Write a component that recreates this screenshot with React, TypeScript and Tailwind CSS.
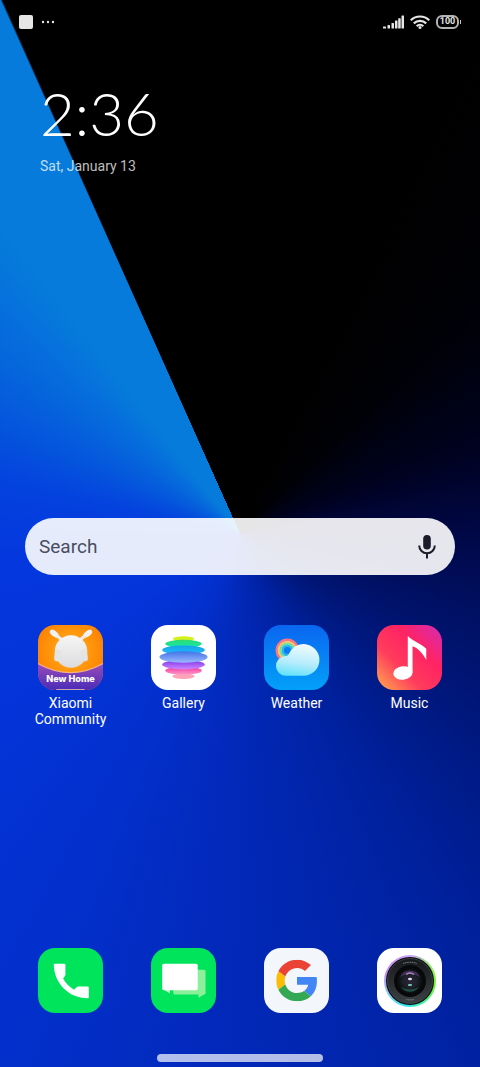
// src/App.tsx
import React, { useState } from 'react';

type AppItem = {
  id: string;
  name: string;
  icon: React.ReactNode;
};

// --- BEGIN ICONS ---

const CommunityIcon = () => (
  <svg viewBox="0 0 64 64" className="size-full">
    <defs>
      <radialGradient id="mi-bg" cx="0.5" cy="0.4" r="0.6">
        <stop offset="0" stopColor="#ffb32c" />
        <stop offset="0.6" stopColor="#ff9208" />
        <stop offset="1" stopColor="#fa7d05" />
      </radialGradient>
      <linearGradient id="mi-band" x1="0" y1="0" x2="0" y2="1">
        <stop offset="0" stopColor="#9a4cb8" />
        <stop offset="1" stopColor="#4a2bb8" />
      </linearGradient>
      <linearGradient id="mi-head" x1="0" y1="0" x2="0" y2="1">
        <stop offset="0" stopColor="#f6f6f6" />
        <stop offset="1" stopColor="#dcdcde" />
      </linearGradient>
    </defs>
    <rect width="64" height="64" fill="url(#mi-bg)" />
    <ellipse cx="16" cy="8.500" rx="5" ry="2.800" transform="rotate(38 16 8.500)" fill="#f2f2f2" />
    <ellipse cx="49" cy="8.500" rx="5" ry="2.800" transform="rotate(-38 49 8.500)" fill="#f2f2f2" />
    <path d="M18 10l6 5M47 10l-6 5" stroke="#eeeeee" strokeWidth="3" />
    <circle cx="32.500" cy="26" r="16" fill="url(#mi-head)" />
    <path d="M17 23C17 28 15.500 31 16 34C16.500 36 19 36 21 35.500L24 26zM48 23C48 28 49.500 31 49 34C48.500 36 46 36 44 35.500L41 26z" fill="#e4e4e5" />
    <path d="M0 38q32 18 64 0v26H0z" fill="url(#mi-band)" />
    <path d="M0 38q32 18 64 0" fill="none" stroke="#ffc48a" strokeOpacity="0.8" strokeWidth="1.200" />
    <path d="M18 63.500h28" stroke="#ffd9a8" strokeOpacity="0.7" strokeWidth="1" />
    <text x="32" y="56" textAnchor="middle" fill="#fff" fontFamily="Inter, sans-serif" fontWeight="800" fontSize="9">
      New Home
    </text>
  </svg>
);

const GalleryIcon = () => (
  <svg viewBox="0 0 64 64" className="size-full bg-white">
    <defs>
      <linearGradient id="ga-2" x1="0" y1="0" x2="0" y2="1">
        <stop offset="0" stopColor="#2fdc6e" />
        <stop offset="1" stopColor="#14e6b4" />
      </linearGradient>
      <linearGradient id="ga-3" x1="0" y1="0" x2="0" y2="1">
        <stop offset="0" stopColor="#12a5e6" />
        <stop offset="1" stopColor="#25b8ff" />
      </linearGradient>
      <linearGradient id="ga-4" x1="0" y1="0" x2="0" y2="1">
        <stop offset="0" stopColor="#3f74e6" />
        <stop offset="1" stopColor="#9db8ff" />
      </linearGradient>
      <linearGradient id="ga-5" x1="0" y1="0" x2="0" y2="1">
        <stop offset="0" stopColor="#7a35e8" />
        <stop offset="1" stopColor="#cf86ff" />
      </linearGradient>
      <linearGradient id="ga-6" x1="0" y1="0" x2="0" y2="1">
        <stop offset="0" stopColor="#f0309c" />
        <stop offset="1" stopColor="#ff9cc8" />
      </linearGradient>
    </defs>
    <ellipse cx="32" cy="50.500" rx="11" ry="2.700" fill="#ffa3b8" />
    <ellipse cx="32" cy="45" rx="18" ry="4" fill="url(#ga-6)" />
    <ellipse cx="32" cy="39" rx="21" ry="4.700" fill="url(#ga-5)" />
    <ellipse cx="32" cy="13.500" rx="10.500" ry="2.500" fill="#d4f01e" />
    <ellipse cx="32" cy="18.500" rx="18" ry="4" fill="url(#ga-2)" />
    <ellipse cx="32" cy="24.700" rx="21" ry="4.500" fill="url(#ga-3)" />
    <ellipse cx="32" cy="31.500" rx="23.700" ry="5.700" fill="url(#ga-4)" />
  </svg>
);

const WeatherIcon = () => (
  <svg viewBox="0 0 64 64" className="size-full">
    <defs>
      <linearGradient id="we-bg" x1="0" y1="0" x2="0" y2="1">
        <stop offset="0" stopColor="#0a66f0" />
        <stop offset="1" stopColor="#03a0f8" />
      </linearGradient>
      <linearGradient id="we-cloud" x1="0.6" y1="0" x2="0.4" y2="1">
        <stop offset="0" stopColor="#f2fbff" />
        <stop offset="0.6" stopColor="#b4ecfc" />
        <stop offset="1" stopColor="#66e2fb" />
      </linearGradient>
    </defs>
    <rect width="64" height="64" fill="url(#we-bg)" />
    <g fill="none" strokeWidth="2.200">
      <circle cx="23" cy="25" r="10.500" stroke="#ff7482" />
      <circle cx="23" cy="25" r="8.500" stroke="#ffc46a" />
      <circle cx="23" cy="25" r="6.500" stroke="#6fe6a4" />
      <circle cx="23" cy="25" r="4.500" stroke="#2fb4f4" />
    </g>
    <path
      d="M22 50a9.700 9.700 0 0 1-1-19.400c1.500 0 2.500-.2 3.500-2A15.600 15.600 0 1 1 38.500 50z"
      fill="url(#we-cloud)"
    />
  </svg>
);

const MusicIcon = () => (
  <svg viewBox="0 0 64 64" className="size-full">
    <defs>
      <linearGradient id="mu-bg" x1="0" y1="1" x2="1" y2="0">
        <stop offset="0" stopColor="#ffae4e" />
        <stop offset="0.35" stopColor="#ff3c5c" />
        <stop offset="0.65" stopColor="#ff2362" />
        <stop offset="1" stopColor="#d32bb8" />
      </linearGradient>
    </defs>
    <rect width="64" height="64" fill="url(#mu-bg)" />
    <path d="M30.300 10.500C34 15 43 18 48.500 23.300V34.500C45 28 40 22.500 35 21V47H30.300z" fill="#fff" />
    <ellipse cx="25.500" cy="47.300" rx="9.500" ry="6.600" transform="rotate(-6 25.500 47.300)" fill="#fff" />
  </svg>
);

const PhoneIcon = () => (
  <svg viewBox="0 0 64 64" className="size-full bg-[#00e45c]">
    <path
      d="M16.500 15.500H26q1 0 1 1v9.500q0 1-.7 1.700L24.700 30Q28.500 37 35.500 41l2.200-2.200q.8-.8 1.800-.8H49q1 0 1 1v9.500q0 1-1 1C31 49.500 16 35.500 15.500 16.500q0-1 1-1z"
      fill="#fff"
    />
  </svg>
);

const MessagesIcon = () => (
  <svg viewBox="0 0 64 64" className="size-full bg-[#00e45c]">
    <path d="M22 21.500h30q1.700 0 1.700 1.700V45l-7 4v-3.200H23.500q-1.500 0-1.500-1.500z" fill="#8cf09a" />
    <path d="M11 40l7.700 4.800V41z" fill="#b8f6c0" />
    <rect x="11" y="15.500" width="35" height="26" rx="1.700" fill="#fff" />
  </svg>
);

const GoogleIcon = () => (
  <svg viewBox="0 0 64 64" className="size-full bg-[#f3f6fa]">
    <svg x="12" y="11.500" width="41" height="41" viewBox="0 0 48 48">
      <path fill="#EA4335" d="M24 9.500c3.540 0 6.710 1.220 9.210 3.600l6.850-6.850C35.900 2.380 30.470 0 24 0 14.620 0 6.510 5.380 2.560 13.220l7.980 6.190C12.430 13.720 17.740 9.500 24 9.500z" />
      <path fill="#4285F4" d="M46.980 24.550c0-1.570-.15-3.090-.38-4.550H24v9.020h12.940c-.58 2.960-2.260 5.480-4.780 7.180l7.730 6c4.510-4.180 7.090-10.360 7.090-17.650z" />
      <path fill="#FBBC05" d="M10.530 28.590c-.48-1.450-.76-2.990-.76-4.590s.27-3.140.76-4.590l-7.980-6.190C.92 16.460 0 20.120 0 24c0 3.880.92 7.540 2.560 10.780l7.970-6.190z" />
      <path fill="#34A853" d="M24 48c6.480 0 11.930-2.130 15.890-5.810l-7.730-6c-2.150 1.450-4.920 2.300-8.160 2.300-6.260 0-11.570-4.220-13.470-9.910l-7.980 6.190C6.510 42.620 14.620 48 24 48z" />
    </svg>
  </svg>
);

const CameraIcon = () => (
  <div className="flex size-full items-center justify-center bg-white">
    <div className="size-[52px] rounded-full bg-[conic-gradient(#c9a5f5,#8cf05a_60deg,#6df51e_100deg,#3ff58c_140deg,#2fe6f0_190deg,#8cc8f5_240deg,#c58cf5_290deg,#c9a5f5)] p-px">
      <svg viewBox="0 0 50 50" className="size-full">
        <defs>
          <linearGradient id="ca-body" x1="0" y1="0" x2="0" y2="1">
            <stop offset="0" stopColor="#17191b" />
            <stop offset="1" stopColor="#3b4044" />
          </linearGradient>
          <radialGradient id="ca-lens">
            <stop offset="0" stopColor="#2c2438" />
            <stop offset="0.5" stopColor="#1c2028" />
            <stop offset="1" stopColor="#050607" />
          </radialGradient>
        </defs>
        <circle cx="25" cy="25" r="24" fill="#0b0c0d" />
        <circle cx="25" cy="25" r="22.500" fill="url(#ca-body)" stroke="#4b5054" strokeWidth="0.700" />
        <circle cx="25" cy="25" r="16" fill="#08090a" />
        <circle cx="25" cy="25" r="14" fill="url(#ca-lens)" />
        <path d="M15 21a11 11 0 0 1 20 0q-10-6-20 0z" fill="#7a4c96" fillOpacity="0.45" />
        <path d="M16 31a11 11 0 0 0 18 0q-9 5-18 0z" fill="#2f8c74" fillOpacity="0.5" />
        <path d="M21 18.500q4-3 8 0" stroke="#a98abf" strokeWidth="1.300" fill="none" />
        <ellipse cx="25" cy="23" rx="2" ry="1.200" fill="#e8d8f8" />
        <ellipse cx="25" cy="29" rx="2.200" ry="0.900" fill="#7fd0b8" />
        <path d="M18 7.500q7-2.500 14 0M21 43.500q4 .8 8 0" stroke="#8b9094" strokeWidth="1" strokeDasharray="1.200 0.600" fill="none" />
      </svg>
    </div>
  </div>
);

// --- END ICONS ---

const homeApps: AppItem[] = [
  { id: 'community', name: 'Xiaomi Community', icon: <CommunityIcon /> },
  { id: 'gallery', name: 'Gallery', icon: <GalleryIcon /> },
  { id: 'weather', name: 'Weather', icon: <WeatherIcon /> },
  { id: 'music', name: 'Music', icon: <MusicIcon /> },
];

const dockApps: AppItem[] = [
  { id: 'phone', name: 'Phone', icon: <PhoneIcon /> },
  { id: 'messages', name: 'Messages', icon: <MessagesIcon /> },
  { id: 'google', name: 'Google', icon: <GoogleIcon /> },
  { id: 'camera', name: 'Camera', icon: <CameraIcon /> },
];

const AppButton = ({ app, showLabel = false }: { app: AppItem; showLabel?: boolean }) => (
  <button type="button" aria-label={app.name} className="flex flex-col items-center gap-[5px]">
    <span className="block size-[65px] overflow-hidden rounded-[17px]">{app.icon}</span>
    {showLabel && <span className="w-20 text-center text-sm leading-4 text-white">{app.name}</span>}
  </button>
);

const StatusBar = () => (
  <header className="flex h-[43px] items-center justify-between px-[19px]">
    <div className="flex items-center gap-2">
      <span className="size-3.5 rounded-xs bg-[#e6e6e6]" />
      <svg viewBox="0 0 14 4" className="h-1 w-3.5" fill="#e6e6e6">
        <circle cx="2" cy="2" r="1.200" />
        <circle cx="7" cy="2" r="1.200" />
        <circle cx="12" cy="2" r="1.200" />
      </svg>
    </div>
    <div className="flex items-center gap-1.5">
      {/* Signal */}
      <svg viewBox="0 0 21 14" className="h-3.5 w-[21px]" fill="#e6e6e6">
        <rect x="0" y="11.500" width="3" height="2" rx="0.500" />
        <rect x="4.500" y="10" width="2.500" height="3.500" rx="0.500" />
        <rect x="8.500" y="8" width="2.500" height="5.500" rx="0.500" />
        <rect x="12" y="5.500" width="2.500" height="8" rx="0.500" />
        <rect x="15.200" y="3.300" width="2.500" height="10.200" rx="0.500" />
        <rect x="18.500" y="0.500" width="2.500" height="13" rx="0.500" />
      </svg>
      {/* Wifi */}
      <svg viewBox="0 0 20 14" className="h-3.5 w-5" fill="none" stroke="#e6e6e6" strokeWidth="2.200">
        <path d="M.8 5.300a13 13 0 0 1 18.400 0" />
        <path d="M3.800 8.400a8.800 8.800 0 0 1 12.400 0" />
        <path d="M6.700 11.200a4.700 4.700 0 0 1 6.600 0" />
        <circle cx="10" cy="12.400" r="1.500" fill="#e6e6e6" stroke="none" />
      </svg>
      {/* Battery */}
      <div className="flex items-center gap-px">
        <span className="flex h-3.5 w-[23px] items-center justify-center rounded-md border-2 border-[#b4b4b4] text-[9px] leading-none font-bold text-[#e6e6e6]">
          100
        </span>
        <span className="h-1 w-px bg-[#c4c4c4]" />
      </div>
    </div>
  </header>
);

export default function HomeScreen() {
  const [query, setQuery] = useState<string>('');

  return (
    <div className="flex min-h-screen flex-col bg-[conic-gradient(#000_0deg,#000_25deg,#000106_45deg,#000220_70deg,#000846_90deg,#001064_110deg,#00187e_130deg,#00219e_152deg,#0228b8_180deg,#0330cc_205deg,#0434da_235deg,#0438de_265deg,#0442de_282deg,#055adc_298deg,#0670dc_314deg,#067bdb_322deg,#067bdb_335.8deg,#000_336deg)] font-[Roboto,sans-serif]">
      <StatusBar />

      {/* Clock */}
      <div className="mt-9 flex flex-col gap-[9px] px-10 text-white">
        <time className="font-[Lato,sans-serif] text-[60px] leading-[68px] font-light">2:36</time>
        <span className="text-sm leading-5 text-white/75">Sat, January 13</span>
      </div>

      {/* Search */}
      <form
        onSubmit={(e) => e.preventDefault()}
        className="mx-[25px] mt-[342px] flex h-[57px] items-center rounded-full bg-white/90 pr-4 pl-3.5"
      >
        <input
          type="text"
          aria-label="Search"
          placeholder="Search"
          value={query}
          onChange={(e) => setQuery(e.target.value)}
          className="h-full min-w-0 flex-1 bg-transparent text-[19px] leading-6 text-[#20243a] placeholder:text-[#484d5e] focus:outline-none"
        />
        <button type="button" aria-label="Voice search" className="size-6">
          <svg viewBox="0 0 24 24" className="size-full">
            <rect x="8.200" y="0" width="7.600" height="14.500" rx="3.800" fill="#1b1b29" />
            <path d="M4.200 10.500a7.800 7.800 0 0 0 15.600 0M12 18.300v5.200" fill="none" stroke="#1b1b29" strokeWidth="2" />
          </svg>
        </button>
      </form>

      {/* Apps */}
      <main className="mt-[50px] grid grid-cols-4 items-start px-3.5">
        {homeApps.map((app) => (
          <AppButton key={app.id} app={app} showLabel />
        ))}
      </main>

      {/* Dock */}
      <nav className="mt-auto grid grid-cols-4 px-3.5">
        {dockApps.map((app) => (
          <AppButton key={app.id} app={app} />
        ))}
      </nav>

      <div className="mx-auto mt-[41px] mb-[5px] h-2 w-[166px] rounded-full bg-white/70" />
    </div>
  );
}
